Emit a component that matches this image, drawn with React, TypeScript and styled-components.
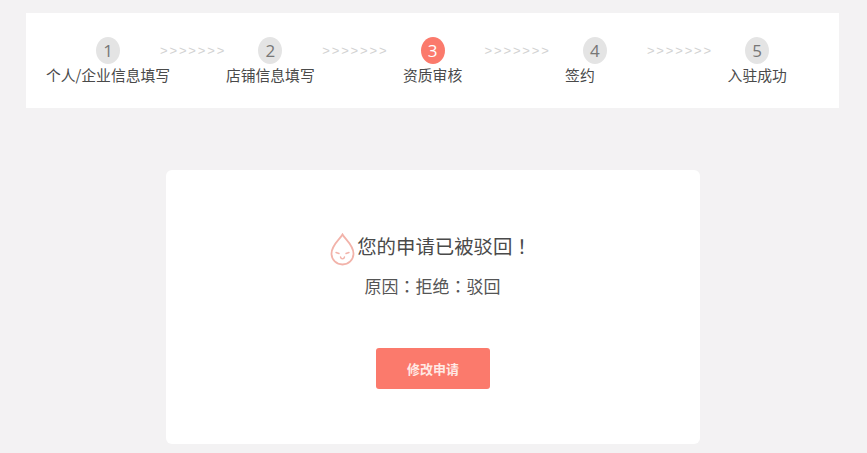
import React from "react";
import styled, { createGlobalStyle } from "styled-components";

const Global = createGlobalStyle`
  html, body { margin: 0; padding: 0; background: #f3f2f3; height: 453px; overflow: hidden; }
  body { font-family: "Noto Sans CJK SC", "Liberation Sans", sans-serif; color: #444; }
`;

const Page = styled.div`
  width: 867px;
  height: 453px;
  padding: 13px 28px 0 26px;
  box-sizing: border-box;
  overflow: hidden;
`;

const StepBar = styled.div`
  height: 95px;
  background: #fff;
  display: flex;
  align-items: flex-start;
  padding: 24px 0 0 82px;
  box-sizing: border-box;
`;

const Step = styled.div`
  width: 0;
  display: flex;
  flex-direction: column;
  align-items: center;
`;

const Circle = styled.div<{ $active?: boolean }>`
  flex: none;
  width: 24px;
  height: 27px;
  border-radius: 50%;
  background: ${(p) => (p.$active ? "#fb7a6c" : "#e4e4e4")};
  color: ${(p) => (p.$active ? "#fff" : "#777")};
  font-size: 17px;
  line-height: 27px;
  text-align: center;
  font-family: "Open Sans", sans-serif;
`;

const StepLabel = styled.div<{ $shift: number }>`
  flex: none;
  font-size: 14.8px;
  line-height: 20px;
  margin-top: 1px;
  white-space: nowrap;
  color: #4a4a4a;
  transform: translateX(${(p) => p.$shift}px);
`;

const Arrows = styled.div`
  width: 162.3px;
  flex: none;
  padding: 6px 0 0 52px;
  box-sizing: border-box;
  color: #d2d2d2;
  font-family: "Liberation Sans", sans-serif;
  font-size: 13px;
  line-height: 16px;
  letter-spacing: 1.85px;
  white-space: nowrap;
`;

const Card = styled.div`
  width: 534px;
  height: 274px;
  margin: 62px 0 0 140px;
  background: #fff;
  border-radius: 6px;
  display: flex;
  flex-direction: column;
  align-items: center;
  box-sizing: border-box;
  padding-top: 61px;
`;

const Title = styled.div`
  display: flex;
  align-items: center;
  gap: 2px;
  height: 33px;
  font-size: 19.4px;
  color: #4a4a4a;
  margin-left: -4px;
`;

const TitleIcon = styled.span`
  display: flex;
  margin-top: 3px;
`;

const TitleText = styled.span`
  margin-top: -5px;
`;

const Punct = styled.span`
  font-family: "Noto Sans CJK TC", sans-serif;
`;

const Reason = styled.div`
  font-size: 17px;
  line-height: 24px;
  margin-top: 10px;
  color: #555;
  margin-left: -1px;
`;

const ActionButton = styled.button`
  width: 114px;
  height: 41px;
  margin-top: 50px;
  border: none;
  border-radius: 3px;
  background: #fb7a6c;
  color: #ffe9e4;
  font-family: inherit;
  font-size: 13px;
  font-weight: 700;
  padding: 0;
`;

const Drop = () => (
  <svg width="25" height="33" viewBox="0 0 25 33" fill="none" stroke="#f2b3aa" strokeWidth="1.8" strokeLinecap="round">
    <path d="M12.5 1.5C10 6 1.5 12 1.5 20.5C1.5 27 6.5 31.5 12.5 31.5C18.5 31.5 23.5 27 23.5 20.5C23.5 12 15 6 12.5 1.5Z" />
    <path d="M6 19.5L9 20.5M16 20.5L19 19.5" strokeWidth="1.4" />
    <path d="M10.5 24C11 26.5 14 26.5 14.5 24" strokeWidth="1.4" />
  </svg>
);

const steps = [
  { n: 1, label: "个人/企业信息填写", shift: 0 },
  { n: 2, label: "店铺信息填写", shift: 0 },
  { n: 3, label: "资质审核", shift: 0 },
  { n: 4, label: "签约", shift: -15 },
  { n: 5, label: "入驻成功", shift: 0 },
];

export default function App() {
  return (
    <Page>
      <Global />
      <StepBar>
        {steps.map((s, i) => (
          <React.Fragment key={s.n}>
            <Step>
              <Circle $active={s.n === 3}>{s.n}</Circle>
              <StepLabel $shift={s.shift}>{s.label}</StepLabel>
            </Step>
            {i < steps.length - 1 && <Arrows>{">>>>>>>"}</Arrows>}
          </React.Fragment>
        ))}
      </StepBar>
      <Card>
        <Title>
          <TitleIcon>
            <Drop />
          </TitleIcon>
          <TitleText>
            您的申请已被驳回<Punct>！</Punct>
          </TitleText>
        </Title>
        <Reason>
          原因<Punct>：</Punct>拒绝<Punct>：</Punct>驳回
        </Reason>
        <ActionButton>修改申请</ActionButton>
      </Card>
    </Page>
  );
}
